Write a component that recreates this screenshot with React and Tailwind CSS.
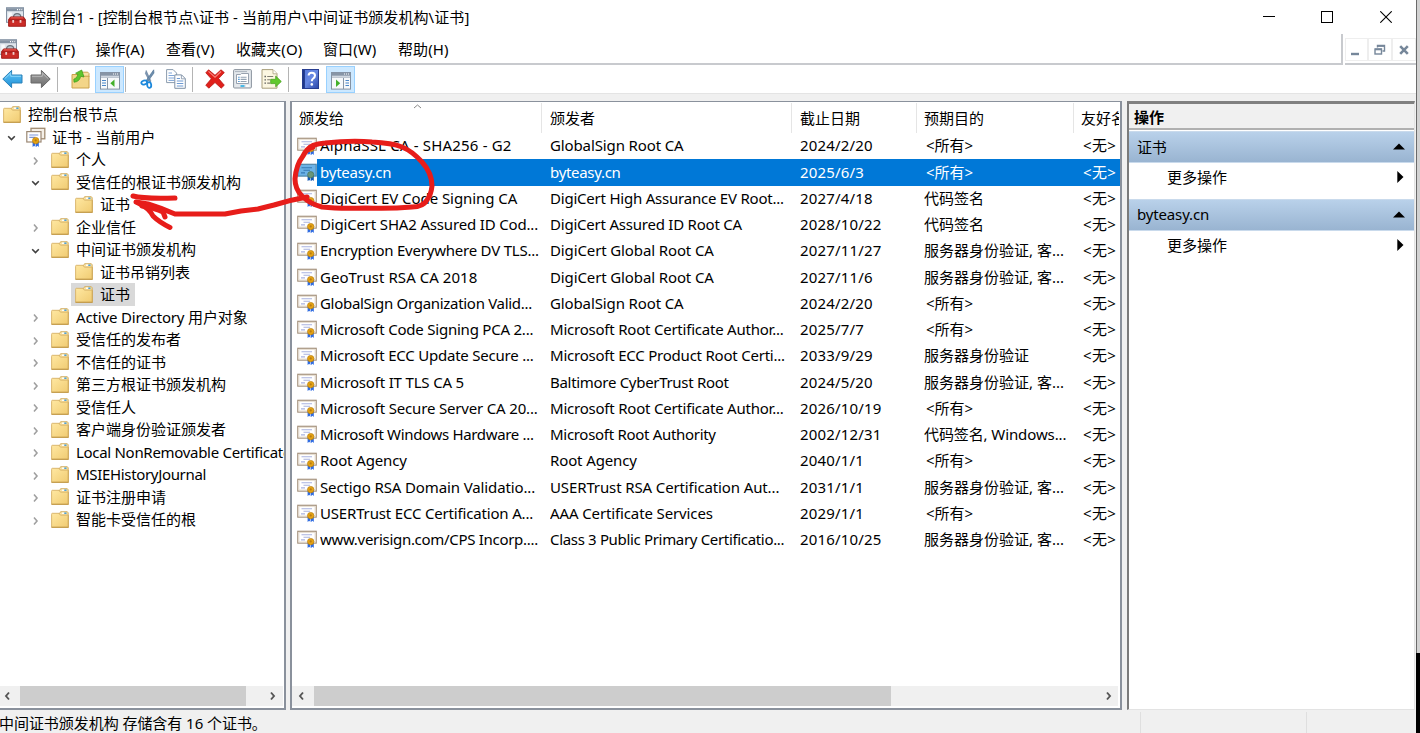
import React from "react";

const tree = [
  { d: 0, t: "控制台根节点", a: "" },
  { d: 1, t: "证书 - 当前用户", a: "open", cert: true },
  { d: 2, t: "个人", a: "closed" },
  { d: 2, t: "受信任的根证书颁发机构", a: "open" },
  { d: 3, t: "证书", a: "" },
  { d: 2, t: "企业信任", a: "closed" },
  { d: 2, t: "中间证书颁发机构", a: "open" },
  { d: 3, t: "证书吊销列表", a: "" },
  { d: 3, t: "证书", a: "", sel: true },
  { d: 2, t: "Active Directory 用户对象", a: "closed", k: "tracking-[-0.15px]" },
  { d: 2, t: "受信任的发布者", a: "closed" },
  { d: 2, t: "不信任的证书", a: "closed" },
  { d: 2, t: "第三方根证书颁发机构", a: "closed" },
  { d: 2, t: "受信任人", a: "closed" },
  { d: 2, t: "客户端身份验证颁发者", a: "closed" },
  { d: 2, t: "Local NonRemovable Certificates", a: "closed", k: "tracking-[-0.3px]" },
  { d: 2, t: "MSIEHistoryJournal", a: "closed", k: "tracking-[-0.33px]" },
  { d: 2, t: "证书注册申请", a: "closed" },
  { d: 2, t: "智能卡受信任的根", a: "closed" },
];

const ALL = "<所有>";
const SRV = "服务器身份验证, 客...";

// Letter spacing steps, from tightest to loosest.
const K = {
  a: "tracking-[-0.33px]",
  b: "tracking-[-0.3px]",
  c: "tracking-[-0.22px]",
  d: "tracking-[-0.17px]",
  e: "tracking-[-0.12px]",
  f: "tracking-[-0.05px]",
  g: "tracking-[0.05px]",
  h: "tracking-[0.18px]",
};

// Each entry: subject, issuer, expiry date, purpose, spacing of the first two columns.
const certs = [
  ["AlphaSSL CA - SHA256 - G2", "GlobalSign Root CA", "2024/2/20", ALL, "h", "e"],
  ["byteasy.cn", "byteasy.cn", "2025/6/3", ALL, "c", "b"],
  ["DigiCert EV Code Signing CA", "DigiCert High Assurance EV Root...", "2027/4/18", "代码签名", "f", "c"],
  ["DigiCert SHA2 Assured ID Cod...", "DigiCert Assured ID Root CA", "2028/10/22", "代码签名", "d", "c"],
  ["Encryption Everywhere DV TLS...", "DigiCert Global Root CA", "2027/11/27", SRV, "c", "e"],
  ["GeoTrust RSA CA 2018", "DigiCert Global Root CA", "2027/11/6", SRV, "g", "e"],
  ["GlobalSign Organization Valid...", "GlobalSign Root CA", "2024/2/20", ALL, "b", "e"],
  ["Microsoft Code Signing PCA 2...", "Microsoft Root Certificate Author...", "2025/7/7", ALL, "c", "c"],
  ["Microsoft ECC Update Secure ...", "Microsoft ECC Product Root Certi...", "2033/9/29", "服务器身份验证", "c", "c"],
  ["Microsoft IT TLS CA 5", "Baltimore CyberTrust Root", "2024/5/20", SRV, "d", "b"],
  ["Microsoft Secure Server CA 20...", "Microsoft Root Certificate Author...", "2026/10/19", ALL, "d", "c"],
  ["Microsoft Windows Hardware ...", "Microsoft Root Authority", "2002/12/31", "代码签名, Windows...", "a", "b"],
  ["Root Agency", "Root Agency", "2040/1/1", ALL, "e", "e"],
  ["Sectigo RSA Domain Validatio...", "USERTrust RSA Certification Aut...", "2031/1/1", SRV, "e", "e"],
  ["USERTrust ECC Certification A...", "AAA Certificate Services", "2029/1/1", ALL, "d", "e"],
  ["www.verisign.com/CPS Incorp....", "Class 3 Public Primary Certificatio...", "2016/10/25", SRV, "b", "a"],
];

function Folder() {
  return (
    <svg width="18" height="17" viewBox="0 0 18 17" className="shrink-0">
      <defs>
        <linearGradient id="fold" x1="0" y1="0" x2="1" y2="1">
          <stop offset="0" stopColor="#ffe8a2" />
          <stop offset="1" stopColor="#f0cb72" />
        </linearGradient>
      </defs>
      <path d="M8 3.2 L9.6 .7 H16.3 L17.2 1.8 V5 H8z" fill="#f8e2a4" stroke="#cfa95a" strokeWidth=".9" />
      <path d="M11 2.2h2.4" stroke="#fff" strokeWidth="1.4" />
      <path d="M13.3 2.2h2.2" stroke="#3b9be0" strokeWidth="1.4" />
      <path d="M.6 3.4 Q.6 2.3 1.3 2.3 H8 L9.4 4.1 H17.3 V16.2 H.6z" fill="url(#fold)" stroke="#d6b065" strokeWidth=".9" />
      <path d="M.5 16.3h17" stroke="#bf9543" strokeWidth="1" />
      <path d="M17.3 4.5v12" stroke="#c9a252" strokeWidth=".8" />
    </svg>
  );
}

function Ribbon() {
  return (
    <g>
      <path d="M10.600 13.5v5.4l1.6-1.1 1.2 1.1v-4zM14 13.500v5.400l1.400-1.100 1.400 1.100v-5.400z" fill="#2f6be0" />
      <circle cx="13.700" cy="12.600" r="3.200" fill="#e5a312" stroke="#b97c0c" strokeWidth=".7" />
      <circle cx="13.700" cy="12.400" r="1.100" fill="#b87b12" />
    </g>
  );
}

function CertIcon({ selected }) {
  return (
    <svg width="20" height="20" viewBox="0 0 20 20" className="shrink-0">
      <rect x=".8" y="2.3" width="18.4" height="11.8" fill={selected ? "#6cb2e6" : "#fff"} stroke={selected ? "#4f86a8" : "#a28f7b"} strokeWidth="1.2" />
      {!selected && <rect x="1.900" y="3.400" width="16.200" height="9.600" fill="none" stroke="#e6dccf" />}
      <path d="M4.500 5.700h10.500M6.500 8.200h6.500M4 10.900h4" stroke={selected ? "#3579b4" : "#a9b2e0"} strokeWidth="1.1" />
      {selected ? (
        <g>
          <path d="M10.600 14v5l1.6-1 1.2 1v-4zM14 14v5l1.4-1 1.4 1v-5z" fill="#1459b4" />
          <circle cx="13.7" cy="12.7" r="3.100" fill="#6a9679" stroke="#47745c" strokeWidth=".7" />
        </g>
      ) : (
        <Ribbon />
      )}
    </svg>
  );
}

function CertStack() {
  return (
    <svg width="20" height="20" viewBox="0 0 20 20" className="shrink-0">
      <rect x="5" y="1.3" width="13.8" height="10.5" fill="#f5efe6" stroke="#a08b70" strokeWidth="1.3" />
      <rect x=".8" y="4.6" width="14.2" height="10.4" fill="#fff" stroke="#9b8873" strokeWidth="1.2" />
      <path d="M3.3 8h9M3.3 10.4h6" stroke="#7d96da" strokeWidth="1.2" />
      <g transform="translate(-4 1)">
        <Ribbon />
      </g>
    </svg>
  );
}

function Toolbox() {
  return (
    <svg width="20" height="20" viewBox="0 0 20 20" className="shrink-0">
      <rect x=".5" y=".7" width="17" height="14.6" fill="#dfe5ec" stroke="#8492a3" />
      <path d="M1 1.2h16v3H1z" fill="#8492a3" />
      <path d="M11 2.7h1M13.200 2.7h1M15.400 2.7h.8" stroke="#fff" strokeWidth="1.2" />
      <path d="M2.3 5.500h3.500v8h-3.500z" fill="#f8fafc" />
      <path d="M7.500 10 Q7.800 6.600 11 6.600 Q14.700 6.600 14.900 10" fill="#b9c2cc" stroke="#6b747e" strokeWidth="1.2" />
      <path d="M2.600 19.300V12.500L4.600 9.900H17.400L19.400 12.500V19.300z" fill="#cb2c27" stroke="#9d1714" strokeWidth=".9" strokeLinejoin="round" />
      <path d="M3 13h16" stroke="#8e1512" strokeWidth=".8" />
      <path d="M5 10.800h12" stroke="#ea6258" strokeWidth=".9" />
      <rect x="6.300" y="13" width="1.800" height="2.800" fill="#f0cfcd" />
      <rect x="13.600" y="13" width="1.800" height="2.800" fill="#f0cfcd" />
    </svg>
  );
}

function Arrow({ flip, light }) {
  const id = flip ? "arrF" : "arrB";
  return (
    <svg width="21" height="20" viewBox="0 0 21 20" className={flip ? "-scale-x-100" : ""}>
      <defs>
        <linearGradient id={id} x1="0" y1="0" x2="0" y2="1">
          <stop offset="0" stopColor={flip ? "#a2a2a2" : "#63c6f7"} />
          <stop offset="1" stopColor={flip ? "#6c6c6c" : "#1d8fd6"} />
        </linearGradient>
      </defs>
      <path d="M.8 10 L9.6 1.4 V6 H20 V14 H9.6 V18.6z" fill={"url(#" + id + ")"} stroke={flip ? "#686868" : "#2b80b8"} strokeLinejoin="round" />
      <path d="M2.8 9.6 L8.7 4 V7.3 H19" fill="none" stroke={light} strokeWidth="1" />
    </svg>
  );
}

function UpFolder() {
  return (
    <svg width="19" height="20" viewBox="0 0 19 20">
      <path d="M9 5.500 L10.500 3.200H16.800L18 4.500V8H9z" fill="#f8e2a4" stroke="#cba24d" />
      <path d="M1 5.500h8l1.500 1.700h7.500v11.800H1z" fill="#f3d588" stroke="#cba24d" />
      <path d="M3 13.200 Q8.600 12.800 9.700 7.300 L13 8 L10.700 1 L4.600 4.200 L7 5.600 Q5.900 9.500 2.800 10.200z" fill="#5ec52c" stroke="#3d9a1c" strokeWidth=".7" />
    </svg>
  );
}

function PaneIcon({ right }) {
  return (
    <svg width="20" height="18" viewBox="0 0 20 18">
      <rect x=".5" y=".5" width="19" height="16.6" fill="#f7f9fb" stroke="#8492a3" />
      <path d="M.5.5h19v5H.5z" fill="#8795a6" />
      <path d="M1 4.300h18" stroke="#d7dee6" strokeWidth="1.200" />
      <path d="M13 2h1M15 2h1M17 2h1" stroke="#fff" strokeWidth="1.2" />
      {right ? (
        <g>
          <path d="M12.500 6v11" stroke="#8795a6" />
          <path d="M14.5 8.5h3.5M14.5 11h3.5M14.5 13.5h3.5" stroke="#4a86c8" strokeWidth="1.1" />
          <path d="M5 7.500v7.500l4.200-3.700z" fill="#43b02a" />
        </g>
      ) : (
        <g>
          <path d="M7.500 6v11" stroke="#8795a6" />
          <path d="M2 8.5h4M2 11h4M2 13.5h4" stroke="#4a86c8" strokeWidth="1.1" />
          <path d="M14.500 7.500v7.500L10.300 11.300z" fill="#43b02a" />
        </g>
      )}
    </svg>
  );
}

function Scissors() {
  return (
    <svg width="16" height="20" viewBox="0 0 16 20">
      <path d="M6.200 1.500 L5.400 4.500 L9.800 13 L11 12.200z" fill="#7f98b4" stroke="#5f7b98" strokeWidth=".6" />
      <path d="M13.700 .8 L14 4 L7.400 13 L5.800 12z" fill="#6e8fae" stroke="#486c8f" strokeWidth=".6" />
      <ellipse cx="4.200" cy="13.500" rx="2.900" ry="2" fill="none" stroke="#1b88dc" strokeWidth="1.8" transform="rotate(-15 4.200 13.500)" />
      <ellipse cx="9.200" cy="16" rx="2" ry="2.900" fill="none" stroke="#1b88dc" strokeWidth="1.8" transform="rotate(-8 9.200 16)" />
    </svg>
  );
}

function CopyIcon() {
  return (
    <svg width="20" height="20" viewBox="0 0 20 20">
      <path d="M.6.6h6.500l3.500 3.500v9.500H.6z" fill="#fff" stroke="#8c9cae" />
      <path d="M2.5 4h3.500M2.5 6.5h6M2.5 9h6M2.5 11.4h6" stroke="#7ea5d8" />
      <path d="M8.8 5.900h6.800l3.700 3.700v9.700H8.800z" fill="#fff" stroke="#7f91a6" />
      <path d="M15.400 6v3.800h3.700" fill="none" stroke="#7f91a6" strokeWidth=".8" />
      <path d="M10.8 9.500h3.200M10.8 12h6.5M10.8 14.500h6.5M10.8 17h6.5" stroke="#6e9ad2" />
    </svg>
  );
}

function DeleteIcon() {
  return (
    <svg width="20" height="20" viewBox="0 0 20 20">
      <path d="M3.6.8 L10 6.3 L16 .8 L19.3 3.6 L13.6 9.6 L19.3 16.2 L16.2 19.2 L10 13.5 L3.8 19.2 L.8 16.2 L6.3 9.8 L.8 3.8z" fill="#e0201b" stroke="#b81713" strokeWidth=".8" strokeLinejoin="round" />
      <path d="M3.5 2.4 L10 8.2 L16 2.5" fill="none" stroke="#f8857c" strokeWidth="1.1" />
    </svg>
  );
}

function PropsIcon() {
  return (
    <svg width="19" height="20" viewBox="0 0 19 20">
      <rect x=".6" y=".6" width="17.8" height="18.4" rx="1" fill="#e4e8ec" stroke="#8a939d" />
      <path d="M2 2.6h12" stroke="#aab3bd" />
      <path d="M3.5 5.5h4l1-1h7v10h-12z" fill="#fff" stroke="#8d99a7" strokeWidth=".9" />
      <path d="M5.2 8.2h1.4M5.2 10.4h1.4M5.2 12.5h1.4" stroke="#3786c9" strokeWidth="1.1" />
      <path d="M7.6 8.2h6M7.6 10.4h6M7.6 12.5h6" stroke="#94a3b3" strokeWidth="1.1" />
      <path d="M7.500 17h4" stroke="#39b4e6" strokeWidth="1.8" />
      <path d="M13 17h3.5" stroke="#fff" strokeWidth="1.6" />
    </svg>
  );
}

function ExportIcon() {
  return (
    <svg width="21" height="20" viewBox="0 0 21 20">
      <path d="M1 .6h11l4 4v14.6H1z" fill="#fcf7e2" stroke="#a99f7c" />
      <path d="M12 .8v4h4" fill="#fff" stroke="#a99f7c" strokeWidth=".8" />
      <path d="M3.500 7.500h1.4M3.500 10.800h1.4M3.500 14.100h1.4" stroke="#555" strokeWidth="1.3" />
      <path d="M6.200 7.500h6M6.200 10.800h3M6.200 14.100h3" stroke="#807d72" strokeWidth="1.1" />
      <path d="M9.7 10.300h5V7.100l5.600 5.4-5.600 5.300v-3.200h-5z" fill="#62c92e" stroke="#4aa222" strokeWidth=".8" />
    </svg>
  );
}

function HelpIcon() {
  return (
    <svg width="17" height="20" viewBox="0 0 17 20">
      <defs>
        <linearGradient id="hlp" x1="0" y1="0" x2="1" y2="1">
          <stop offset="0" stopColor="#5577da" />
          <stop offset=".5" stopColor="#6888e2" />
          <stop offset="1" stopColor="#2946a8" />
        </linearGradient>
      </defs>
      <rect x=".5" y=".5" width="16" height="19" fill="url(#hlp)" stroke="#283e91" />
      <path d="M1.800 1v18" stroke="#1f3789" strokeWidth="2.200" />
      <path d="M6.6 6.600 Q6.6 3.700 9.8 3.700 Q13 3.700 13 6.600 Q13 8.300 11.200 9.500 Q9.800 10.400 9.800 12.300" fill="none" stroke="#fff" strokeWidth="2" />
      <circle cx="9.8" cy="15.4" r="1.3" fill="#fff" />
    </svg>
  );
}

function Chevron({ dir, color, w }) {
  const d = { right: "M3 1.5 L6 5 L3 8.5", left: "M6 1.5 L3 5 L6 8.5", down: "M1.200 3.2 L4.5 6.500 L7.800 3.2", up: "M1 6 L4.5 3 L8 6" }[dir];
  return (
    <svg width="9" height="10" viewBox="0 0 9 10" className="shrink-0">
      <path d={d} fill="none" stroke={color} strokeWidth={w} />
    </svg>
  );
}

function TreeRow({ n }) {
  const pad = ["pl-[3px]", "pl-[7px]", "pl-[31px]", "pl-[71px]"][n.d];
  return (
    <div className={"flex h-[22.5px] shrink-0 items-center " + pad}>
      {n.d > 0 && n.d < 3 && (
        <div className={"flex shrink-0 items-center pt-[3px] " + (n.d === 1 ? "w-[19px]" : "w-[20px]")}>
          {n.a === "open" ? <Chevron dir="down" color="#404040" w="1.6" /> : <Chevron dir="right" color="#a0a0a0" w="1.6" />}
        </div>
      )}
      <div className={"flex h-[22.5px] items-center " + (n.d === 3 ? "pl-[4px] pr-[5px] " : "") + (n.sel ? "bg-[#d9d9d9]" : "")}>
        {n.cert ? <CertStack /> : <Folder />}
        <span className={"whitespace-pre " + (n.cert ? "ml-[6px] tracking-[0.1px] " : "ml-[7px] ") + (n.k || "")}>{n.t}</span>
      </div>
    </div>
  );
}

function ScrollBar({ thumb, left, right }) {
  return (
    <div className="flex h-[20px] shrink-0 items-center bg-[#f0f0f0]">
      <div className={"flex w-[20px] " + left}>
        <Chevron dir="left" color="#555" w="1.9" />
      </div>
      <div className={"h-[20px] bg-[#cdcdcd] " + thumb} />
      <div className={"ml-auto flex " + right}>
        <Chevron dir="right" color="#555" w="1.9" />
      </div>
    </div>
  );
}

const cell = "shrink-0 overflow-hidden whitespace-pre";

function CertRow({ r, sel }) {
  return (
    <div className="flex h-[26.25px] shrink-0 items-center pl-[5px]">
      <div className="flex w-[20px] shrink-0 pb-px">
        <CertIcon selected={sel} />
      </div>
      <div className={"flex h-[26.25px] w-[803px] shrink-0 items-center overflow-hidden pb-[1.5px] pl-[3px] " + (sel ? "bg-[#0078d7] text-white" : "")}>
        <div className={cell + " w-[230px] " + K[r[4]]}>{r[0]}</div>
        <div className={cell + " w-[250px] " + K[r[5]]}>{r[1]}</div>
        <div className={cell + " w-[124px] tracking-[0.18px]"}>{r[2]}</div>
        <div className={cell + " w-[157px] " + (r[3] === ALL ? "pl-[2px]" : r[3].includes("Win") ? "tracking-[-0.1px]" : "")}>{r[3]}</div>
        <div className={cell + " w-[39px] pl-[2px] tracking-[0.3px]"}>{"<无>"}</div>
      </div>
    </div>
  );
}

function Section({ title }) {
  return (
    <div className="flex h-[32px] shrink-0 items-center justify-between border-y border-[#c9daec] bg-gradient-to-b from-[#b9d1ea] to-[#99b4d1] pb-px pl-[8px] pr-[9px]">
      <span className="tracking-[-0.15px]">{title}</span>
      <svg width="12" height="7" viewBox="0 0 12 7">
        <path d="M0 6.5 L6 .5 L12 6.5z" fill="#000" />
      </svg>
    </div>
  );
}

function More() {
  return (
    <div className="flex h-[35.5px] shrink-0 items-center justify-between pb-[7px] pl-[38px] pr-[10px]">
      <span>更多操作</span>
      <svg width="7" height="12" viewBox="0 0 7 12">
        <path d="M.3 0 L6.5 6 L.3 12z" fill="#000" />
      </svg>
    </div>
  );
}

const Sep = ({ c }) => <div className={"h-[25px] w-px shrink-0 bg-[#b4b4b4] " + c} />;
const Tool = ({ c, children }) => <div className={"flex h-[27px] shrink-0 items-center justify-center " + c}>{children}</div>;

export default function App() {
  return (
    <div className="relative flex h-[733px] w-[1420px] overflow-hidden bg-white font-['Noto_Sans','Noto_Sans_CJK_SC',sans-serif] text-[15px] leading-[20px] text-black">
      <div className="flex w-[1416px] shrink-0 flex-col">
        <div className="flex h-[34px] shrink-0 items-center pb-px pl-[6px]">
          <Toolbox />
          <span className="ml-[5px] whitespace-pre tracking-[0.08px]">{"控制台1 - [控制台根节点\\证书 - 当前用户\\中间证书颁发机构\\证书]"}</span>
          <div className="ml-auto flex items-center">
            <svg width="12" height="12" className="mr-[46px]"><path d="M0 5.5h12" stroke="#000" /></svg>
            <svg width="12" height="12" className="mr-[47px]"><rect x=".5" y=".5" width="11" height="11" fill="none" stroke="#000" /></svg>
            <svg width="12" height="12" className="mr-[24px]"><path d="M.3.3l11.4 11.4M11.7.3L.3 11.7" stroke="#000" strokeWidth="1.1" /></svg>
          </div>
        </div>

        <div className="flex h-[31px] shrink-0">
          <div className="flex h-[31px] w-[1343px] shrink-0 items-center overflow-hidden border-b-2 border-r-2 border-[#c8cace] pt-px tracking-[0.1px]">
            <div className="-ml-px w-[29px]"><Toolbox /></div>
            <span className="w-[67.5px]">文件(F)</span>
            <span className="w-[70.5px]">操作(A)</span>
            <span className="w-[70px]">查看(V)</span>
            <span className="w-[87px]">收藏夹(O)</span>
            <span className="w-[75px]">窗口(W)</span>
            <span>帮助(H)</span>
          </div>
          <div className="ml-[2px] flex grow border-b-2 border-[#c8cace] pb-[2px] pt-[4px]">
            <div className="flex w-[23px] items-center justify-center border border-[#eee] pr-[3px] pt-[2px]">
              <svg width="8" height="10"><path d="M0 8h8" stroke="#76879a" strokeWidth="2.4" /></svg>
            </div>
            <div className="flex w-[24px] items-center justify-center border border-[#eee]">
              <svg width="12" height="12" fill="none" stroke="#76879a"><path d="M3.5 3.5V1.5h7v5.5h-2" strokeWidth="1.4" /><path d="M3.5 2h7" strokeWidth="1.8" /><rect x="1" y="5" width="6.500" height="5" strokeWidth="1.4" /><path d="M1 5.4h7" strokeWidth="1.8" /></svg>
            </div>
            <div className="flex w-[24px] items-center justify-center border border-[#eee]">
              <svg width="10" height="10"><path d="M1.2 1.2l7.6 7.6M8.8 1.2L1.2 8.8" stroke="#76879a" strokeWidth="2.6" /></svg>
            </div>
          </div>
        </div>

        <div className="flex h-[29px] shrink-0 items-center border-b border-[#e4e4e4]">
          <Tool c="w-[24px]"><Arrow light="#8bd6fa" /></Tool>
          <Tool c="w-[33px]"><Arrow flip light="#b8b8b8" /></Tool>
          <Sep c="" />
          <Tool c="ml-[7px] w-[30px]"><UpFolder /></Tool>
          <Tool c="w-[29px] border border-[#99d1ff] bg-[#cce8ff] pt-[3px]"><PaneIcon /></Tool>
          <Sep c="ml-px" />
          <Tool c="ml-[7px] w-[29px]"><Scissors /></Tool>
          <Tool c="w-[28px]"><CopyIcon /></Tool>
          <Sep c="ml-[2px]" />
          <Tool c="ml-[7px] w-[29px]"><DeleteIcon /></Tool>
          <Tool c="w-[27px]"><PropsIcon /></Tool>
          <Tool c="w-[30px] pl-px"><ExportIcon /></Tool>
          <Sep c="ml-[2px]" />
          <Tool c="ml-[7px] w-[29px]"><HelpIcon /></Tool>
          <Tool c="ml-px w-[29px] border border-[#99d1ff] bg-[#cce8ff] pt-[3px]"><PaneIcon right /></Tool>
        </div>

        <div className="flex h-[616px] shrink-0 bg-[#f0f0f0] pt-[7px]">
          <div className="flex w-[286px] shrink-0 flex-col overflow-hidden border-b-2 border-r-2 border-t border-[#8a919c] bg-white">
            <div className="flex w-[284px] grow flex-col overflow-hidden pt-px">
              {tree.map((n, i) => <TreeRow key={i} n={n} />)}
            </div>
            <div className="pb-[2px] pr-px"><ScrollBar thumb="w-[226px]" left="pl-[3px]" right="pr-[6px]" /></div>
          </div>

          <div className="ml-[4px] flex w-[832px] shrink-0 flex-col overflow-hidden border-2 border-t border-[#8a919c] bg-white">
            <div className="relative mt-px flex h-[30px] shrink-0 items-center overflow-hidden">
              <span className="flex h-[30px] w-[250px] shrink-0 items-center border-r border-[#e5e5e5] pl-[7px]">颁发给</span>
              <span className="flex h-[30px] w-[250px] shrink-0 items-center border-r border-[#e5e5e5] pl-[8px]">颁发者</span>
              <span className="flex h-[30px] w-[125px] shrink-0 items-center border-r border-[#e5e5e5] pl-[8px]">截止日期</span>
              <span className="flex h-[30px] w-[157px] shrink-0 items-center border-r border-[#e5e5e5] pl-[7px]">预期目的</span>
              <span className="w-[45px] shrink-0 overflow-hidden whitespace-pre pl-[7px]">友好名称</span>
              <div className="absolute left-[121px] top-[-1px]"><Chevron dir="up" color="#888" w="1" /></div>
            </div>
            <div className="flex grow flex-col">
              {certs.map((r, i) => <CertRow key={i} r={r} sel={i === 1} />)}
            </div>
            <div className="pb-[2px] pr-[2px]"><ScrollBar thumb="ml-[1.5px] w-[577.5px]" left="pl-[5px]" right="pr-[5px]" /></div>
          </div>

          <div className="ml-[5px] flex w-[288px] shrink-0 flex-col border-b border-l-2 border-r border-t-[3px] border-b-[#e3e3e3] border-l-[#7b7b7b] border-r-[#e3e3e3] border-t-[#808080] bg-white">
            <div className="mb-px flex h-[26px] shrink-0 items-center border-b-2 border-[#b0b0b0] bg-[#f0f0f0] pl-[5px] pt-px font-bold">操作</div>
            <Section title="证书" />
            <More />
            <Section title="byteasy.cn" />
            <More />
          </div>
        </div>

        <div className="flex grow items-center bg-[#f0f0f0] pt-[2px]">
          <span className="-ml-px w-[1141px] whitespace-pre tracking-[-0.05px]">中间证书颁发机构 存储含有 16 个证书。</span>
          <div className="h-[22px] w-[167px] border-x border-[#dfdfdf]" />
        </div>
      </div>

      <div className="flex w-[4px] shrink-0 flex-col">
        <div className="h-[653px] border-l border-[#6a6a6a] bg-[#d2d2d2]" />
        <div className="grow bg-black" />
      </div>

      <svg width="460" height="240" viewBox="0 0 460 240" className="pointer-events-none absolute left-0 top-0" fill="none" stroke="#e71d1a" strokeWidth="5" strokeLinecap="round" strokeLinejoin="round">
        <path d="M307 150 Q311 144 325 143 Q352 140 372 142 Q392 143 402 147 Q412 151 422 162 Q432 173 432 186 Q431 195 427 200 Q423 207 412 207 Q390 209 365 208 Q340 209 322 207 Q310 204 302 196 Q295 189 295 179 Q296 165 303 156 Q306 149 313 147" />
        <path d="M307 197 Q290 200 274 205 L258 209 L241 211 L225 214 L175 214 Q161 208 148 204 L136 202" />
        <path d="M133 196 Q144 199 175 198" />
        <path d="M138 203 Q149 208 153 216 Q159 222 170 227.500" />
        <path d="M142 206 Q155 208 163 212 L165 217" />
      </svg>
    </div>
  );
}
